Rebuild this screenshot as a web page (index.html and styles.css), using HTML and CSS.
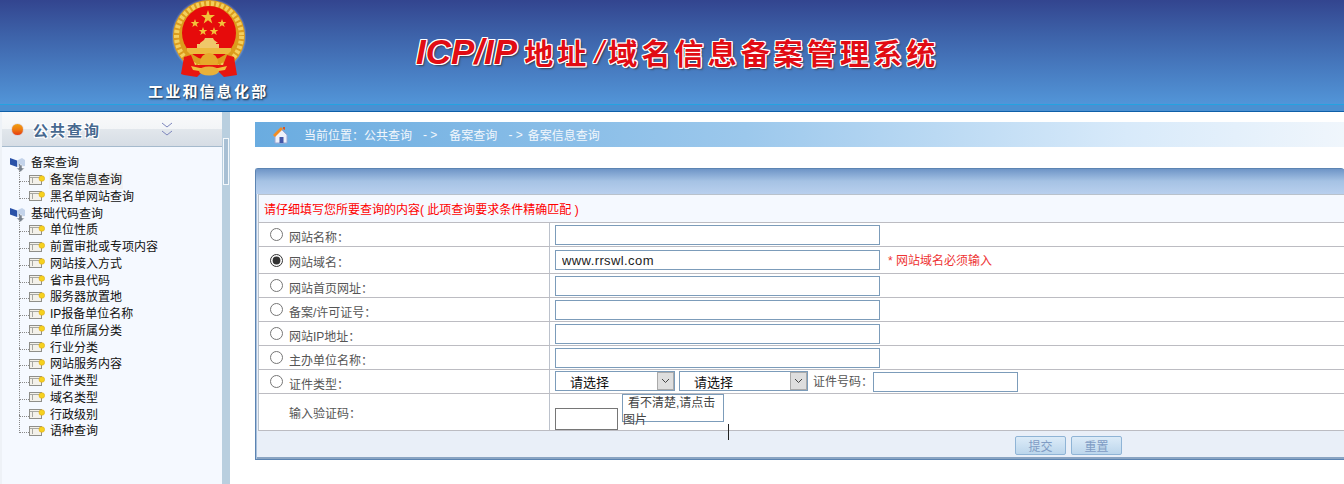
FILE: index.html
```html
<!DOCTYPE html>
<html lang="zh-CN">
<head>
	<meta charset="UTF-8">
	<title>ICP/IP地址/域名信息备案管理系统</title>
	<link rel="stylesheet" href="styles.css">
</head>
<body>
	<svg class="defs" width="0" height="0">
		<symbol id="folder" viewBox="0 0 16 16">
			<path d="M0 2l7 2.500V11L0 8.500z" fill="#2a52a8"/>
			<path d="M7 4.500L12 2l3 2v6l-8 1z" fill="#c3d3ea"/>
			<path d="M9 9h3v3h2.500L10.500 16 6.500 12H9z" fill="#76808c" stroke="#fff" stroke-width=".5"/>
		</symbol>
		<symbol id="leaf" viewBox="0 0 16 12">
			<rect x="0.500" y="1.500" width="12" height="9" fill="#f3f1ea" stroke="#8f8f8a"/>
			<path d="M3.500 3v6M1 3.500h11" stroke="#a8a8a2" fill="none"/>
			<circle cx="12.800" cy="4.500" r="2.800" fill="#f6d21f" stroke="#dca814" stroke-width=".6"/>
		</symbol>
	</svg>

	<div class="top">
		<div class="logo">
			<svg class="emblem" viewBox="0 0 74 78" width="74" height="78">
				<defs>
					<radialGradient id="halo"><stop offset="85%" stop-color="#dfeaff" stop-opacity=".6"/><stop offset="100%" stop-color="#fff" stop-opacity="0"/></radialGradient>
				</defs>
				<circle cx="37" cy="36" r="38" fill="url(#halo)"/>
				<circle cx="37" cy="36" r="36" fill="#dc9c1c"/>
				<circle cx="37" cy="36" r="32.500" fill="none" stroke="#f4cf5c" stroke-width="5" stroke-dasharray="3 2"/>
				<circle cx="37" cy="33" r="27" fill="#e60b0b"/>
				<polygon points="36,10 37.700,15 43,15 38.700,18.200 40.300,23.400 36,20.200 31.700,23.400 33.300,18.200 29,15 34.300,15" fill="#f2c23a"/>
				<polygon points="23,19 24.100,22 27.300,22 24.700,24 25.700,27 23,25.200 20.300,27 21.300,24 18.700,22 21.900,22" fill="#f2c23a"/>
				<polygon points="50,19 51.100,22 54.300,22 51.700,24 52.700,27 50,25.200 47.300,27 48.300,24 45.700,22 48.900,22" fill="#f2c23a"/>
				<polygon points="31,27 32.100,30 35.300,30 32.700,32 33.700,35 31,33.200 28.300,35 29.300,32 26.700,30 29.900,30" fill="#f2c23a"/>
				<polygon points="42,27 43.100,30 46.300,30 43.700,32 44.700,35 42,33.200 39.300,35 40.300,32 37.700,30 40.900,30" fill="#f2c23a"/>
				<path d="M28 43l4-3 1-2h8l1 2 4 3h-2v1h3v4H25v-4h3z" fill="#f0c76a"/>
				<path d="M15 48h44v3l-3 3H18l-3-3z" fill="#edb93f"/>
				<circle cx="37" cy="62" r="9" fill="#e7a92a"/>
				<path d="M12 57l7-2 4 10h28l4-10 7 2 3 18-13 2-6-6H31l-6 6-13-2-3-1z" fill="#e8150f"/>
				<path d="M19 66q18 5 36 0l-2 4q-16 3-32 0z" fill="#f0c040"/>
				<ellipse cx="37" cy="71" rx="10" ry="4.500" fill="#e9b13a"/>
			</svg>
			<div class="dept">工业和信息化部</div>
		</div>
		<div class="sys"><b>ICP/IP</b><span class="zh">地址</span><span class="slash">/</span><span class="zh">域名信息备案管理系统</span></div>
	</div>

	<div class="wrap">
		<div class="side">
			<div class="side-title">
				<i class="dot"></i>
				<span>公共查询</span>
				<svg class="fold" width="12" height="14" viewBox="0 0 12 14"><path d="M1 1l5 4 5-4M1 9l5 4 5-4" fill="none" stroke="#7d86bd"/></svg>
			</div>
			<ul class="tree">
				<li class="root"><svg><use href="#folder"/></svg>备案查询</li>
				<li><svg><use href="#leaf"/></svg><span class="on">备案信息查询</span></li>
				<li class="end"><svg><use href="#leaf"/></svg>黑名单网站查询</li>
				<li class="root"><svg><use href="#folder"/></svg>基础代码查询</li>
				<li><svg><use href="#leaf"/></svg>单位性质</li>
				<li><svg><use href="#leaf"/></svg>前置审批或专项内容</li>
				<li><svg><use href="#leaf"/></svg>网站接入方式</li>
				<li><svg><use href="#leaf"/></svg>省市县代码</li>
				<li><svg><use href="#leaf"/></svg>服务器放置地</li>
				<li><svg><use href="#leaf"/></svg>IP报备单位名称</li>
				<li><svg><use href="#leaf"/></svg>单位所属分类</li>
				<li><svg><use href="#leaf"/></svg>行业分类</li>
				<li><svg><use href="#leaf"/></svg>网站服务内容</li>
				<li><svg><use href="#leaf"/></svg>证件类型</li>
				<li><svg><use href="#leaf"/></svg>域名类型</li>
				<li><svg><use href="#leaf"/></svg>行政级别</li>
				<li class="end"><svg><use href="#leaf"/></svg>语种查询</li>
			</ul>
		</div>
		<div class="split"><i class="grip"></i></div>
		<div class="main">
			<div class="crumb">
				<svg class="home" width="20" height="20" viewBox="0 0 20 20">
					<path d="M4 10l6-6 6 6v8H4z" fill="#eef1fa" stroke="#9aa6d4"/>
					<path d="M2 10l8-8 2 2-8 8z" fill="#f28c22"/>
					<path d="M12 2h2v3l-2-1z" fill="#d8582a"/>
					<path d="M8.500 12h4v6h-4z" fill="#4557a8"/>
				</svg>
				<span>当前位置：公共查询</span><span class="arrow">- &gt;</span><span>备案查询</span><span class="arrow last">- &gt;</span><span>备案信息查询</span>
			</div>
			<form class="panel">
				<div class="panel-head"></div>
				<table class="grid">
					<colgroup><col class="col-lab"><col></colgroup>
					<tr><td colspan="2" class="tip">请仔细填写您所要查询的内容( 此项查询要求条件精确匹配 )</td></tr>
					<tr>
						<td class="lab"><input type="radio" name="t"><span>网站名称：</span></td>
						<td><input class="text" type="text"></td>
					</tr>
					<tr class="r27">
						<td class="lab"><input type="radio" name="t" checked><span>网站域名：</span></td>
						<td><input class="text" type="text" value="www.rrswl.com"><em class="must">* 网站域名必须输入</em></td>
					</tr>
					<tr>
						<td class="lab"><input type="radio" name="t"><span>网站首页网址：</span></td>
						<td><input class="text" type="text"></td>
					</tr>
					<tr>
						<td class="lab"><input type="radio" name="t"><span>备案/许可证号：</span></td>
						<td><input class="text" type="text"></td>
					</tr>
					<tr>
						<td class="lab"><input type="radio" name="t"><span>网站IP地址：</span></td>
						<td><input class="text" type="text"></td>
					</tr>
					<tr>
						<td class="lab"><input type="radio" name="t"><span>主办单位名称：</span></td>
						<td><input class="text" type="text"></td>
					</tr>
					<tr>
						<td class="lab"><input type="radio" name="t"><span>证件类型：</span></td>
						<td>
							<div class="certs">
								<div class="sel"><span>请选择</span><i><svg width="9" height="6" viewBox="0 0 9 6"><path d="M1 1l3.500 3.500L8 1" fill="none" stroke="#444"/></svg></i></div>
								<div class="sel wide"><span>请选择</span><i><svg width="9" height="6" viewBox="0 0 9 6"><path d="M1 1l3.500 3.500L8 1" fill="none" stroke="#444"/></svg></i></div>
								<label>证件号码：</label>
								<input class="text short" type="text">
							</div>
						</td>
					</tr>
					<tr class="r37">
						<td class="lab plain"><span>输入验证码：</span></td>
						<td class="captcha">
							<input class="code" type="text">
							<div class="pic">看不清楚,请点击图片</div>
							<i class="caret"></i>
						</td>
					</tr>
				</table>
				<div class="foot">
					<button class="btn" type="button">提交</button>
					<button class="btn" type="button">重置</button>
				</div>
			</form>
		</div>
	</div>
</body>
</html>
```
FILE: styles.css
```css
* {
	box-sizing: border-box;
}

html, body {
	margin: 0;
	height: 484px;
	overflow: hidden;
	background: #fff;
}

body {
	font: 12px "Liberation Sans", "Noto Sans CJK SC", sans-serif;
	color: #222;
}

.defs {
	position: absolute;
}

.top {
	height: 112px;
	display: flex;
	background: linear-gradient(#33458f 0, #3d62a9 35px, #5295d8 104px, #25a2e0 104px, #25a2e0 105px, #4a90d2 105px, #4a90d2 111px, #0f5fa8 111px);
}

.logo {
	width: 416px;
	padding: 0 0 0 148px;
}

.emblem {
	display: block;
	margin-left: 24px;
	overflow: hidden;
}

.dept {
	margin-top: 2px;
	color: #fff;
	font-size: 15px;
	font-weight: bold;
	letter-spacing: 2.200px;
	white-space: nowrap;
	text-shadow: 1px 1px 2px #123;
}

.sys {
	margin-top: 35px;
	height: 34px;
	display: flex;
	align-items: center;
	color: #e10c14;
	font-weight: bold;
	white-space: nowrap;
	text-shadow: 1px 0 0 #fff, -1px 0 0 #fff, 0 1px 0 #fff, 0 -1px 0 #fff, 1px 1px 0 #fff, -1px -1px 0 #fff, 1px -1px 0 #fff, -1px 1px 0 #fff, 2px 2px 2px #345;
}

.sys b {
	font-size: 35px;
	font-style: italic;
	margin-right: 7px;
}

.sys .zh {
	font-size: 29px;
	letter-spacing: 4.100px;
}

.sys .slash {
	width: 18px;
	font-size: 32px;
	font-style: italic;
	text-align: center;
	font-weight: normal;
}

.wrap {
	display: flex;
	height: 372px;
}

.side {
	width: 222px;
	border-left: 2px solid #eef2f7;
	background: #f5f9ff;
	flex: none;
}

.side-title {
	height: 35px;
	display: flex;
	align-items: center;
	padding-left: 10px;
	background: linear-gradient(#f9fafb 0, #f3f5f7 50%, #e2e7ec 50%, #d6dde5 100%);
	border-bottom: 1px solid #a5bacd;
}

.dot {
	width: 11px;
	height: 11px;
	border-radius: 50%;
	background: linear-gradient(#f0a010 0, #ee7a10 50%, #e63a10 100%);
	box-shadow: 0 0 1px #a33;
}

.side-title span {
	margin-left: 10px;
	color: #47698f;
	font-size: 15px;
	font-weight: bold;
	letter-spacing: 2px;
	text-shadow: 1px 1px 0 #fff, -1px -1px 0 #fff, 1px -1px 0 #fff, -1px 1px 0 #fff;
}

.fold {
	margin-left: 60px;
}

.tree {
	list-style: none;
	margin: 0;
	padding: 8.400px 0 0 8px;
}

.tree li {
	height: 16.750px;
	line-height: 17px;
	display: flex;
	align-items: center;
	padding-left: 19px;
	color: #111;
	white-space: nowrap;
	position: relative;
}

.tree li svg {
	width: 16px;
	height: 12px;
	margin: -2px 5px 0 0;
	flex: none;
}

.tree li:before {
	content: "";
	position: absolute;
	left: 9px;
	top: -8px;
	width: 9px;
	height: 17px;
	border-left: 1px dotted #888;
	border-bottom: 1px dotted #888;
}

.tree li.root {
	padding-left: 0;
}

.tree li.root:before {
	display: none;
}

.tree li.root svg {
	width: 16px;
	height: 16px;
	margin: 0 5px 0 0;
}

.tree .on {
	background: #f1f2f3;
	padding: 0 1px;
	margin-left: -1px;
}

.split {
	width: 8px;
	flex: none;
	background: #b9cfdf;
	position: relative;
}

.grip {
	position: absolute;
	left: 1px;
	top: 26px;
	width: 6px;
	height: 47px;
	background: #a8c0d4;
	border: 1px solid #f4f8fb;
}

.main {
	flex: 1;
	min-width: 0;
	padding: 10px 0 0 25px;
}

.crumb {
	height: 25px;
	display: flex;
	align-items: center;
	padding-left: 16px;
	color: #f2f7fc;
	background: linear-gradient(90deg, #6aace0 0, #9cc8ec 45%, #d8eafa 80%, #f0f6fc 100%);
	white-space: nowrap;
}

.home {
	margin-right: 13px;
}

.arrow {
	margin: 0 12px 0 11px;
}

.arrow.last {
	margin-right: 5px;
}

.panel {
	height: 292px;
	margin-top: 21px;
	background: #e9eff8;
	border: 1px solid #5c84b2;
	border-radius: 3px 3px 0 0;
	border-right: 0;
	box-shadow: inset 1px 0 0 #a8c0dc, inset 0 -2px 0 #8aa4c2;
}

.panel-head {
	height: 25px;
	background: linear-gradient(#6f95c7 0, #a5c2e4 12px, #b9d0ee 100%);
}

.grid {
	width: 1086px;
	margin-left: 2px;
	border-collapse: collapse;
	background: #fff;
	table-layout: fixed;
	border-top: 1px solid #b9c2cc;
}

.col-lab {
	width: 291px;
}

.grid td {
	border: 0;
	border-bottom: 1px solid #bcbcc2;
	height: 24px;
	padding: 0 5px;
	vertical-align: middle;
}

.grid td:first-child {
	border-left: 1px solid #b9c2cc;
	border-right: 1px solid #bcc2cc;
}

.grid td.tip {
	height: 28px;
	padding-left: 5px;
	border-right: 0;
	color: #f00;
	background: #f5f9ff;
}

.r27 td {
	height: 27px;
}

.r37 td {
	height: 37px;
}

.lab span {
	color: #555;
	position: relative;
	top: 2px;
}

.lab input {
	width: 13px;
	height: 13px;
	margin: 0 6px;
	vertical-align: middle;
	accent-color: #333;
	position: relative;
	top: -2px;
}

.lab.plain span {
	margin-left: 25px;
	top: 0;
}

.text {
	width: 325px;
	height: 20px;
	padding: 0 6px;
	border: 1px solid #7c9cba;
	outline: 0;
	font: 13px "Liberation Sans", "Noto Sans CJK SC", sans-serif;
	letter-spacing: .4px;
	color: #222;
	vertical-align: middle;
}

.must {
	margin-left: 8px;
	color: #e33;
	font-style: normal;
	position: relative;
	top: 1px;
}

.certs {
	display: flex;
	align-items: flex-start;
	white-space: nowrap;
}

.certs label {
	margin: 2px 0 0 5px;
	color: #555;
	line-height: 18px;
}

.sel {
	display: flex;
	width: 120px;
	height: 20px;
	margin-right: 4px;
	border: 1px solid #7c9cba;
	align-items: center;
	justify-content: space-between;
	background: #fff;
	font-size: 13px;
	color: #111;
}

.sel.wide {
	width: 129px;
	margin-right: 0;
}

.sel span {
	padding-left: 14px;
}

.sel i {
	width: 17px;
	height: 18px;
	display: flex;
	align-items: center;
	justify-content: center;
	background: #dedede;
	border: 1px solid #aaa;
}

.text.short {
	width: 145px;
	margin-top: 1px;
}

.captcha {
	position: relative;
}

.code {
	display: block;
	width: 63px;
	height: 22px;
	margin-top: 13px;
	border: 1px solid #767676;
	outline: 0;
}

.pic {
	position: absolute;
	left: 72px;
	top: 0;
	width: 102px;
	height: 28px;
	border: 1px solid #7c9cba;
	line-height: 17px;
	text-indent: 5px;
	color: #444;
	background: #fff;
	word-break: break-all;
}

.caret {
	position: absolute;
	left: 178px;
	top: 30px;
	width: 1px;
	height: 16px;
	background: #222;
}

.foot {
	height: 28px;
	padding: 5px 0 0 759px;
	display: flex;
	gap: 5px;
}

.btn {
	width: 51px;
	height: 19px;
	padding: 0;
	border: 1px solid #8fb4d6;
	border-radius: 2px;
	background: linear-gradient(#dcebf8 0, #bcd6ec 100%);
	color: #7f9cc4;
	font: 12px "Liberation Sans", "Noto Sans CJK SC", sans-serif;
}
```
